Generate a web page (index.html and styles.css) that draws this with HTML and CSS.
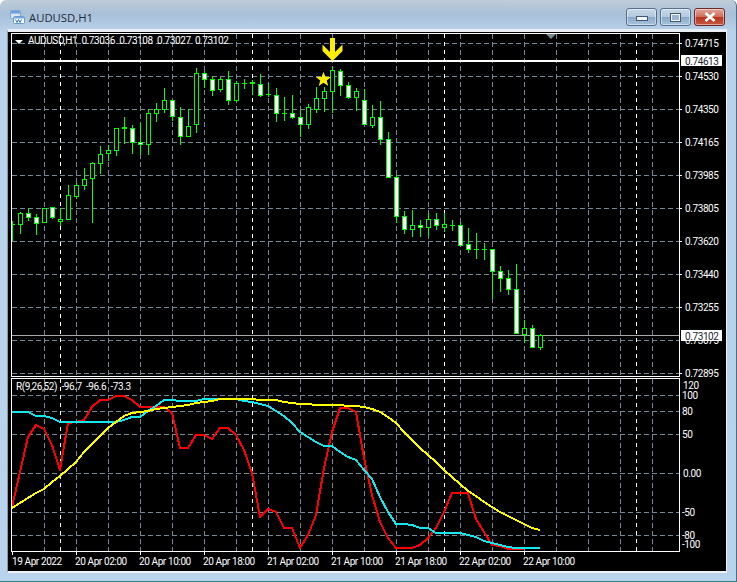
FILE: index.html
```html
<!DOCTYPE html>
<html lang="en">
<head>
<meta charset="utf-8">
<title>AUDUSD,H1</title>
<link rel="stylesheet" href="styles.css">
</head>
<body>
<div class="window">
  <header class="titlebar">
    <svg class="app-icon" width="15" height="14" viewBox="0 0 15 14">
      <rect x="0.5" y="0.5" width="10" height="8" rx="1" fill="#d3e3f6" stroke="#7fa8d6"/>
      <rect x="1" y="1" width="9" height="2.500" fill="#6f9fd6"/>
      <path d="M2 6h1M4 6h1M6 6h1" stroke="#fff"/>
      <rect x="3.500" y="6.500" width="11" height="7" rx="1" fill="#f6fafe" stroke="#6b9ad0"/>
      <rect x="4" y="7" width="10" height="1.500" fill="#79a8dc"/>
      <path d="M5.500 9.500l1.500 3 1.500-3 1.500 3 1.500-3" fill="none" stroke="#3f78b5"/>
    </svg>
    <span class="title">AUDUSD,H1</span>
    <div class="controls">
      <button class="ctl"><span class="glyph-min"></span></button>
      <button class="ctl"><span class="glyph-max"></span></button>
      <button class="ctl ctl-close">
        <svg width="12" height="10" viewBox="0 0 12 10"><path d="M1.500 1l9 8M10.500 1l-9 8" stroke="#fff" stroke-width="2.600" fill="none"/></svg>
      </button>
    </div>
  </header>
  <main class="client">
    <svg class="chart" width="718" height="540" viewBox="8 32 718 540">
      <!-- grid -->
      <path class="grid" d="M44.500 34V376M76.500 34V376M108.500 34V376M140.500 34V376M172.500 34V376M204.500 34V376M236.500 34V376M268.500 34V376M300.500 34V376M332.500 34V376M364.500 34V376M396.500 34V376M428.500 34V376M460.500 34V376M492.500 34V376M524.500 34V376M556.500 34V376M588.500 34V376M620.500 34V376M652.500 34V376"/>
      <path class="grid" d="M44.500 379V551M76.500 379V551M108.500 379V551M140.500 379V551M172.500 379V551M204.500 379V551M236.500 379V551M268.500 379V551M300.500 379V551M332.500 379V551M364.500 379V551M396.500 379V551M428.500 379V551M460.500 379V551M492.500 379V551M524.500 379V551M556.500 379V551M588.500 379V551M620.500 379V551M652.500 379V551"/>
      <path class="grid" d="M12 43.500H679M12 76.500H679M12 109.500H679M12 142.500H679M12 175.500H679M12 208.500H679M12 241.500H679M12 274.500H679M12 307.500H679M12 340.500H679M12 373.500H679"/>
      <path class="grid" d="M12 395.500H679M12 411.500H679M12 434.500H679M12 473.500H679M12 512.500H679M12 535.500H679"/>
      <path class="grid-major" d="M60.500 34V376M252.500 34V376M444.500 34V376M636.500 34V376M60.500 379V551M252.500 379V551M444.500 379V551M636.500 379V551"/>
      <!-- level lines -->
      <path class="level-bright" d="M12 61H680"/>
      <path class="level-dim" d="M12 335.500H680"/>
      <!-- wicks -->
      <path class="wick" d="M12.500 221V241M20.500 212V234M28.500 208V221M36.500 214V235M52.500 207V219M60.500 208V226M68.500 185V219M76.500 183V199M84.500 168V190M92.500 162V223M100.500 146V174M108.500 145V161M116.500 128V156M124.500 117V144M132.500 125V154M140.500 123V155M148.500 109V155M156.500 103V122M164.500 88V113M172.500 100V121M180.500 107V145M188.500 109V137M196.500 68V133M204.500 71V88M212.500 76V96M220.500 77V92M228.500 71V105M236.500 81V102M244.500 79V89M252.500 80V95M260.500 74V97M268.500 83V97M276.500 88V122M284.500 97V121M292.500 95V119M300.500 110V137M308.500 104V129M316.500 87V113M324.500 87V112M332.500 67V113M340.500 69V96M348.500 82V99M356.500 88V111M364.500 89V125M372.500 105V128M380.500 101V145M388.500 132V177M396.500 175V223M404.500 211V234M412.500 210V237M420.500 220V237M428.500 213V236M436.500 213V230M444.500 213V232M452.500 220V231M460.500 222V246M468.500 228V253M476.500 233V259M484.500 243V260M492.500 249V299M500.500 266V292M508.500 270V295M516.500 264V334M524.500 320V343M532.500 325V347M540.500 334V350"/>
      <!-- doji dashes -->
      <path class="wick" d="M12 224.500H15M242 83.500H247M266 94.500H271M282 113.500H287M450 225.500H455M474 249.500H479M482 249.500H487"/>
      <!-- rising bodies -->
      <path class="body-up" d="M18.500 213.500h4v11h-4zM42.500 208.500h4v14h-4zM58.500 219.500h4v2h-4zM66.500 195.500h4v24h-4zM74.500 185.500h4v11h-4zM82.500 179.500h4v6h-4zM90.500 163.500h4v15h-4zM98.500 154.500h4v9h-4zM106.500 150.500h4v3h-4zM114.500 128.500h4v22h-4zM146.500 113.500h4v31h-4zM154.500 109.500h4v4h-4zM162.500 100.500h4v9h-4zM186.500 126.500h4v10h-4zM194.500 73.500h4v51h-4zM218.500 79.500h4v10h-4zM234.500 83.500h4v17h-4zM306.500 107.500h4v17h-4zM314.500 98.500h4v11h-4zM322.500 91.500h4v7h-4zM330.500 70.500h4v21h-4zM354.500 91.500h4v6h-4zM370.500 117.500h4v8h-4zM410.500 225.500h4v4h-4zM426.500 219.500h4v8h-4zM442.500 224.500h4v3h-4zM522.500 328.500h4v6h-4zM538.500 335.500h4v12h-4z"/>
      <!-- falling bodies -->
      <path class="body-down" d="M26.500 213.500h4v4h-4zM34.500 217.500h4v6h-4zM50.500 207.500h4v10h-4zM122.500 127h4v1h-4zM130.500 128.500h4v14h-4zM138.500 142.500h4v2h-4zM170.500 100.500h4v16h-4zM178.500 117.500h4v19h-4zM202.500 73.500h4v6h-4zM210.500 79.500h4v11h-4zM226.500 79.500h4v21h-4zM250.500 82h4v1.500h-4zM258.500 84.500h4v11h-4zM274.500 95.500h4v18h-4zM290.500 113.500h4v4h-4zM298.500 117.500h4v7h-4zM338.500 71.500h4v14h-4zM346.500 85.500h4v12h-4zM362.500 100.500h4v24h-4zM378.500 117.500h4v22h-4zM386.500 139.500h4v38h-4zM394.500 177.500h4v39h-4zM402.500 216.500h4v13h-4zM418.500 225h4v2h-4zM434.500 219.500h4v6h-4zM458.500 225.500h4v20h-4zM466.500 244.500h4v5h-4zM490.500 249.500h4v22h-4zM498.500 271.500h4v7h-4zM506.500 278.500h4v11h-4zM514.500 289.500h4v44h-4zM530.500 328.500h4v19h-4z"/>
      <!-- markers -->
      <path class="star" d="M323.500 71.700l2 5.300h5.700l-4.500 3.500 1.600 5.500-4.800-3.200-4.800 3.200 1.600-5.500-4.500-3.500h5.700z"/>
      <path class="arrow" d="M330 38h5v14l7.500-7.500v6.500l-10 10-10-10v-6.500l7.500 7.500z"/>
      <path class="marker-tri" d="M546 34h10l-5 5z"/>
      <!-- indicator lines -->
      <polyline class="line-red" points="12,507 20,472 28,437 36,425 44,429 52,445 60,470 68,423 76,422 84,420 92,407 100,400 108,400 116,396 124,396 132,400 140,407 148,407 156,407 164,407 172,413 180,448 188,448 196,435 204,435 212,439 220,428 228,428 236,435 244,450 252,473 260,517 268,509 276,512 284,528 292,528 300,548 308,535 316,515 324,468 332,432 340,408 348,408 356,412 364,458 372,495 380,522 388,538 396,548 404,548 412,548 420,545 428,538 436,528 444,512 452,493 460,493 468,493 476,519 484,532 492,545 500,546 508,549 516,549 524,549"/>
      <polyline class="line-cyan" points="12,412 28,412 36,416 44,416 52,418 60,422 68,422 108,422 116,422 124,420 132,417 140,417 148,411 156,406 164,400 172,400 180,401 188,401 196,401 204,399 212,399 228,399 236,399 244,401 252,402 260,404 268,406 276,411 284,416 292,423 300,432 308,437 316,442 324,446 332,446 340,452 348,457 356,460 364,470 372,479 380,497 388,512 396,524 404,524 412,525 420,528 428,528 436,533 444,533 452,533 460,533 468,535 476,537 484,541 492,543 500,545 508,547 516,548 524,548 532,548 540,548"/>
      <polyline class="line-yellow" points="12,508 20,503 28,498 36,493 44,489 52,482 60,476 68,469 76,462 84,452 92,444 100,436 108,428 116,422 124,416 132,413 140,412 148,411 156,409 164,408 172,407 180,406 188,405 196,403 204,402 212,401 220,399 228,399 236,399 244,399 252,399 260,400 268,400 276,400 284,402 292,403 300,404 308,404 316,405 324,405 332,405 340,405 348,406 356,406 364,407 372,409 380,412 388,417 396,423 404,432 412,440 420,448 428,455 436,462 444,470 452,477 460,484 468,491 476,496 484,502 492,507 500,512 508,516 516,520 524,524 532,528 540,530"/>
      <!-- pane frames -->
      <rect class="pane" x="11.500" y="33.500" width="668" height="343"/>
      <rect class="pane" x="11.500" y="378.500" width="668" height="173"/>
      <!-- legends -->
      <path class="legend-tri" d="M15 40h8l-4 4z"/>
      <text class="legend" x="28" y="44">AUDUSD,H1 0.73036 0.73108 0.73027 0.73102</text>
      <text class="legend" x="16" y="390">R(9,26,52) -96.7 -96.6 -73.3</text>
      <!-- price axis -->
      <path class="tick" d="M679 43.500h3M679 76.500h3M679 109.500h3M679 142.500h3M679 175.500h3M679 208.500h3M679 241.500h3M679 274.500h3M679 307.500h3M679 373.500h3"/>
      <g class="label">
        <text x="685" y="47">0.74715</text>
        <text x="685" y="80">0.74530</text>
        <text x="685" y="113">0.74350</text>
        <text x="685" y="146">0.74165</text>
        <text x="685" y="179">0.73985</text>
        <text x="685" y="212">0.73805</text>
        <text x="685" y="245">0.73620</text>
        <text x="685" y="278">0.73440</text>
        <text x="685" y="311">0.73255</text>
        <text x="685" y="344">0.73075</text>
        <text x="685" y="377">0.72895</text>
      </g>
      <rect class="price-box" x="681" y="55" width="41" height="11"/>
      <text class="label-dark" x="685" y="65">0.74613</text>
      <rect class="price-box" x="681" y="330" width="41" height="11"/>
      <text class="label-dark" x="685" y="340">0.73102</text>
      <!-- indicator axis -->
      <g class="label">
        <text x="683" y="389">120</text>
        <text x="682" y="399">100</text>
        <text x="682" y="415">80</text>
        <text x="682" y="438">50</text>
        <text x="683" y="477">0.00</text>
        <text x="682" y="516">-50</text>
        <text x="682" y="539">-80</text>
        <text x="682" y="548">-100</text>
      </g>
      <!-- time axis -->
      <path class="tick" d="M12.500 551v4M76.500 551v4M140.500 551v4M204.500 551v4M268.500 551v4M332.500 551v4M396.500 551v4M460.500 551v4M524.500 551v4"/>
      <g class="label">
        <text x="12" y="565">19 Apr 2022</text>
        <text x="75" y="565">20 Apr 02:00</text>
        <text x="139" y="565">20 Apr 10:00</text>
        <text x="203" y="565">20 Apr 18:00</text>
        <text x="267" y="565">21 Apr 02:00</text>
        <text x="331" y="565">21 Apr 10:00</text>
        <text x="395" y="565">21 Apr 18:00</text>
        <text x="459" y="565">22 Apr 02:00</text>
        <text x="523" y="565">22 Apr 10:00</text>
      </g>
    </svg>
  </main>
</div>
</body>
</html>
```

FILE: styles.css
```css
html, body {
  margin: 0;
  padding: 0;
  background: #fff;
}

.window {
  box-sizing: border-box;
  width: 737px;
  height: 582px;
  display: flex;
  flex-direction: column;
  padding: 0 10px 8px 7px;
  border-radius: 6px 6px 0 0;
  border-right: 1px solid #4a6f80;
  border-bottom: 1px solid #2f7f8f;
  background: linear-gradient(180deg, #c0ccd8 0, #a8c0d8 14px, #b9d1ea 32px, #b9d3ec 100%);
}

.titlebar {
  height: 29px;
  flex: none;
  display: flex;
  align-items: flex-start;
}

.app-icon {
  margin: 10px 0 0 3px;
}

.title {
  margin: 9px 0 0 4px;
  font: 11.300px/17px "Open Sans", sans-serif;
  color: #1d2c3c;
}

.controls {
  margin: 8px 1px 0 auto;
  display: flex;
  gap: 3px;
}

.ctl {
  width: 31px;
  height: 18px;
  padding: 0;
  display: flex;
  align-items: center;
  justify-content: center;
  border: 1px solid #56708e;
  border-radius: 3px;
  box-shadow: inset 0 0 0 1px rgba(255, 255, 255, 0.45);
  background: linear-gradient(180deg, #c8d9ea 0, #b3c9df 48%, #8aa9c8 52%, #a8c4de 100%);
}

.ctl-close {
  border-color: #6a2a2a;
  background: linear-gradient(180deg, #e0a598 0, #cf6f5c 48%, #b8341f 52%, #c65a44 100%);
}

.glyph-min {
  width: 10px;
  height: 3px;
  margin-top: 3px;
  background: #f2f5f8;
  border: 1px solid #44586e;
}

.glyph-max {
  box-sizing: border-box;
  width: 11px;
  height: 9px;
  border: 2px solid #f2f5f8;
  outline: 1px solid #44586e;
  outline-offset: -1px;
  background: #9db6cf;
}

.client {
  flex: 1;
  box-sizing: border-box;
  border-top: 3px solid #e8eef4;
  border-left: 1px solid #8a96a2;
  border-right: 1px solid #eef2f6;
  border-bottom: 2px solid #eef2f6;
  background: #000;
  width: 720px;
  overflow: hidden;
}

.chart {
  display: block;
  background: #000;
}

.grid {
  fill: none;
  stroke: #778899;
  stroke-width: 1;
  stroke-dasharray: 5 3;
  shape-rendering: crispEdges;
}

.grid-major {
  fill: none;
  stroke: #fff;
  stroke-width: 1;
  stroke-dasharray: 4 4;
  shape-rendering: crispEdges;
}

.level-bright {
  stroke: #fff;
  stroke-width: 2;
  shape-rendering: crispEdges;
}

.level-dim {
  stroke: #a9a9a9;
  stroke-width: 1;
  shape-rendering: crispEdges;
}

.wick {
  fill: none;
  stroke: #00ff00;
  stroke-width: 1;
  shape-rendering: crispEdges;
}

.body-up {
  fill: #000;
  stroke: #00ff00;
  stroke-width: 1;
  shape-rendering: crispEdges;
}

.body-down {
  fill: #fff;
  stroke: #00ff00;
  stroke-width: 1;
  shape-rendering: crispEdges;
}

.star {
  fill: #ffee00;
}

.arrow {
  fill: #ffee00;
}

.marker-tri {
  fill: #778899;
}

.legend-tri {
  fill: #fff;
}

.line-red,
.line-cyan,
.line-yellow {
  fill: none;
  stroke-width: 2;
  stroke-linejoin: round;
  shape-rendering: crispEdges;
}

.line-red {
  stroke: #ff0000;
}

.line-cyan {
  stroke: #14e8ee;
}

.line-yellow {
  stroke: #ffff00;
}

.pane {
  fill: none;
  stroke: #fff;
  stroke-width: 1;
  shape-rendering: crispEdges;
}

.tick {
  fill: none;
  stroke: #fff;
  stroke-width: 1;
  shape-rendering: crispEdges;
}

.label,
.legend {
  fill: #fff;
  font: 10px "Roboto", sans-serif;
  letter-spacing: -0.400px;
}

.legend {
  word-spacing: 2.200px;
}

.label-dark {
  fill: #1a2430;
  font: 10px "Roboto", sans-serif;
  letter-spacing: -0.400px;
}

.price-box {
  fill: #fff;
}
```
